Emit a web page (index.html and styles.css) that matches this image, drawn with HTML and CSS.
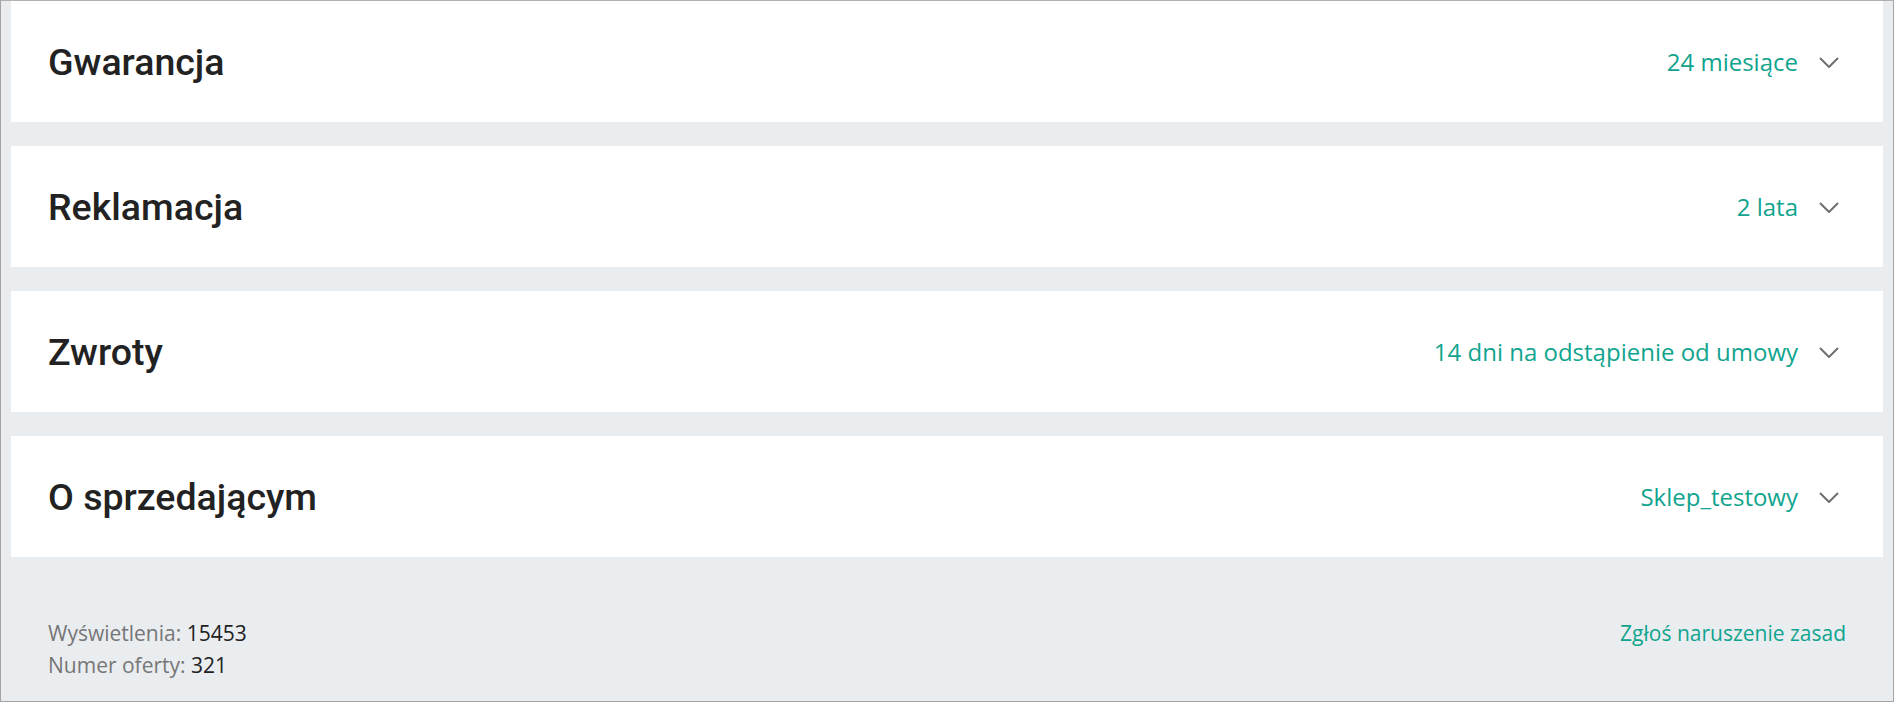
FILE: index.html
```html
<!DOCTYPE html>
<html lang="pl">
<head>
<meta charset="utf-8">
<link rel="stylesheet" href="styles.css">
</head>
<body>
<div class="page">
  <div class="card">
    <h2 class="title">Gwarancja</h2>
    <div class="meta"><span class="value">24 miesiące</span><svg class="chev" viewBox="0 0 20 11"><path d="M1 1 L10 10 L19 1" /></svg></div>
  </div>
  <div class="card">
    <h2 class="title">Reklamacja</h2>
    <div class="meta"><span class="value">2 lata</span><svg class="chev" viewBox="0 0 20 11"><path d="M1 1 L10 10 L19 1" /></svg></div>
  </div>
  <div class="card">
    <h2 class="title">Zwroty</h2>
    <div class="meta"><span class="value">14 dni na odstąpienie od umowy</span><svg class="chev" viewBox="0 0 20 11"><path d="M1 1 L10 10 L19 1" /></svg></div>
  </div>
  <div class="card">
    <h2 class="title">O sprzedającym</h2>
    <div class="meta"><span class="value">Sklep_testowy</span><svg class="chev" viewBox="0 0 20 11"><path d="M1 1 L10 10 L19 1" /></svg></div>
  </div>
  <div class="footer">
    <div class="stats">
      <div><span class="label">Wyświetlenia:</span> <span class="num">15453</span></div>
      <div><span class="label">Numer oferty:</span> <span class="num">321</span></div>
    </div>
    <a class="report" href="#">Zgłoś naruszenie zasad</a>
  </div>
</div>
</body>
</html>
```

FILE: styles.css
```css
html, body {
  margin: 0;
  padding: 0;
}
body {
  background: #ffffff;
}
.page {
  box-sizing: border-box;
  width: 1894px;
  height: 702px;
  border: 1px solid #a3a3a3;
  border-top-color: #b0b0b0;
  background: #eaedf0;
  padding: 0 10px;
  display: flex;
  flex-direction: column;
  gap: 24px;
}
.card {
  background: #ffffff;
  height: 121px;
  display: flex;
  align-items: center;
  justify-content: space-between;
  padding: 0 44px 0 37px;
}
.title {
  margin: 0;
  font-family: Roboto, "Liberation Sans", sans-serif;
  font-weight: 500;
  font-size: 37.5px;
  color: #222222;
  letter-spacing: 0;
}
.meta {
  display: flex;
  align-items: center;
  gap: 21px;
}
.value {
  font-family: "Open Sans", "Liberation Sans", sans-serif;
  font-size: 24px;
  color: #10a48e;
}
.chev {
  width: 20px;
  height: 11px;
  margin-top: 2px;
}
.chev path {
  fill: none;
  stroke: #6f6f6f;
  stroke-width: 2;
}
.footer {
  display: flex;
  justify-content: space-between;
  align-items: flex-start;
  padding: 36px 37px 0 37px;
  font-family: "Open Sans", "Liberation Sans", sans-serif;
  font-size: 21px;
  line-height: 32px;
}
.label {
  color: #767676;
}
.num {
  color: #222222;
}
.report {
  color: #10a48e;
  text-decoration: none;
}
```
